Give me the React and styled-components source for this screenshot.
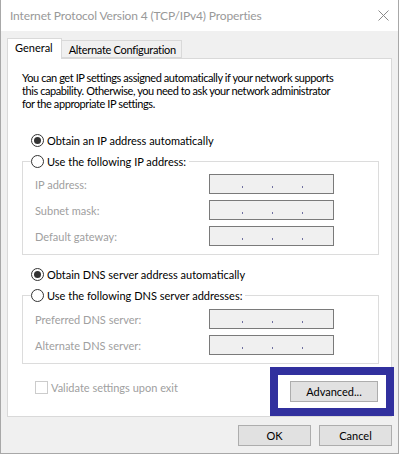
import styled, { createGlobalStyle } from "styled-components";

const GlobalStyle = createGlobalStyle`
    html, body {
        margin: 0;
        padding: 0;
        background: #ffffff;
    }
    * {
        box-sizing: border-box;
    }
`;

const font = `Lato, "Noto Sans", "Liberation Sans", sans-serif`;

const StyledWindow = styled.div`
    position: relative;
    width: 399px;
    height: 454px;
    background: #f0f0f0;
    border: 1px solid #a8a8a8;
    border-top: none;
    font-family: ${font};
    font-size: 11px;
    color: #000;
    display: flex;
    flex-direction: column;
    white-space: nowrap;
`;

const StyledTitleBar = styled.div`
    height: 31px;
    background: #fff;
    display: flex;
    align-items: center;
    justify-content: space-between;
    padding: 0 9px 0 9px;
    color: #999;
    font-size: 12px;
    letter-spacing: -0.15px;
`;

const StyledBody = styled.div`
    padding: 7px 6px 0 6px;
`;

const StyledTabs = styled.div`
    display: flex;
    align-items: flex-end;
    height: 20px;
    position: relative;
    z-index: 1;
`;

const StyledTab = styled.div`
    height: ${({ active }) => (active ? "21px" : "18px")};
    margin-bottom: ${({ active }) => (active ? "-1px" : "0")};
    margin-left: ${({ active }) => (active ? "0" : "-1px")};
    padding: 0 ${({ active }) => (active ? "8px" : "5px")} 0 7px;
    background: ${({ active }) => (active ? "#fff" : "#f0f0f0")};
    border: 1px solid #d9d9d9;
    border-bottom: ${({ active }) => (active ? "none" : "1px solid #d9d9d9")};
    display: flex;
    align-items: center;
    padding-bottom: ${({ active }) => (active ? "3px" : "0")};
    letter-spacing: ${({ active }) => (active ? "0" : "-0.3px")};
`;

const StyledPanel = styled.div`
    height: 359px;
    background: #fff;
    border: 1px solid #d9d9d9;
    padding: 12px 12px 0 14px;
    display: flex;
    flex-direction: column;
`;

const StyledIntro = styled.p`
    margin: 0;
    line-height: 13px;
    letter-spacing: -0.42px;
`;

const StyledRadioRow = styled.label`
    display: flex;
    align-items: center;
    height: 16px;
    margin-top: ${({ top }) => top || 0}px;
    margin-left: 9px;
    gap: 3px;
`;

const StyledRadio = styled.span`
    width: 13px;
    height: 13px;
    border-radius: 50%;
    border: 1px solid #333;
    background: #fff;
    display: flex;
    align-items: center;
    justify-content: center;

    &::after {
        content: "";
        width: 7px;
        height: 7px;
        border-radius: 50%;
        background: ${({ checked }) => (checked ? "#333" : "transparent")};
    }
`;

const StyledGroup = styled.fieldset`
    margin: ${({ top }) => top || 0}px 0 0 0;
    padding: 0 0 8px 0;
    border: 1px solid #dcdcdc;
    display: flex;
    flex-direction: column;
    gap: 6px;

    legend {
        margin-left: 8px;
        padding: 0 3px 0 0;
    }
    legend label {
        margin: 0;
    }
`;

const StyledFieldRow = styled.div`
    display: flex;
    align-items: center;
    justify-content: space-between;
    padding: 0 44px 0 12px;
    color: #a0a0a0;
    margin-top: ${({ top }) => top || 0}px;
`;

const StyledIpBox = styled.div`
    width: 125px;
    height: 20px;
    border: 1px solid #7a7a7a;
    background: #f0f0f0;
    display: flex;
    align-items: flex-end;
    gap: 29px;
    padding: 0 0 5px 32px;

    span {
        width: 1px;
        height: 2px;
        background: #7070a0;
    }
`;

const StyledBottomRow = styled.div`
    display: flex;
    align-items: flex-start;
    justify-content: space-between;
    margin-top: 17px;
    padding-left: 13px;
`;

const StyledCheckLabel = styled.label`
    display: flex;
    align-items: center;
    height: 16px;
    margin-top: -2px;
    gap: 3px;
    color: #a0a0a0;
`;

const StyledCheckbox = styled.span`
    width: 13px;
    height: 13px;
    border: 1px solid #cccccc;
    background: #fff;
`;

const StyledButton = styled.button`
    width: ${({ w }) => w}px;
    height: 21px;
    background: #e1e1e1;
    border: 1px solid #adadad;
    font-family: ${font};
    font-size: 11px;
    color: #000;
    padding: 0;
`;

const StyledHighlight = styled.div`
    position: relative;
    margin-right: 1px;

    &::before {
        content: "";
        position: absolute;
        left: -20px;
        top: -14px;
        right: -16px;
        bottom: -14px;
        border: 8px solid #31309e;
    }
`;

const StyledFooter = styled.div`
    display: flex;
    justify-content: flex-end;
    gap: 8px;
    padding: 8px 6px 0 0;
`;

const IpBox = () => (
    <StyledIpBox>
        <span />
        <span />
        <span />
    </StyledIpBox>
);

const CloseIcon = () => (
    <svg width="11" height="11" viewBox="0 0 11 11">
        <path d="M0.5 0.5 L10.5 10.5 M10.5 0.5 L0.5 10.5" stroke="#8a8a8a" strokeWidth="1" />
    </svg>
);

const ipFields = ["IP address:", "Subnet mask:", "Default gateway:"];
const dnsFields = ["Preferred DNS server:", "Alternate DNS server:"];

const App = () => {
    return (
        <>
            <GlobalStyle />
            <StyledWindow>
                <StyledTitleBar>
                    <span>Internet Protocol Version 4 (TCP/IPv4) Properties</span>
                    <CloseIcon />
                </StyledTitleBar>
                <StyledBody>
                    <StyledTabs>
                        <StyledTab active>General</StyledTab>
                        <StyledTab>Alternate Configuration</StyledTab>
                    </StyledTabs>
                    <StyledPanel>
                        <StyledIntro>
                            You can get IP settings assigned automatically if your network supports
                            <br />
                            this capability. Otherwise, you need to ask your network administrator
                            <br />
                            for the appropriate IP settings.
                        </StyledIntro>
                        <StyledRadioRow top={22}>
                            <StyledRadio checked />
                            Obtain an IP address automatically
                        </StyledRadioRow>
                        <StyledGroup top={5}>
                            <legend>
                                <StyledRadioRow>
                                    <StyledRadio />
                                    Use the following IP address:
                                </StyledRadioRow>
                            </legend>
                            {ipFields.map((label, index) => (
                                <StyledFieldRow key={index} top={index === 0 ? 5 : 0}>
                                    <span>{label}</span>
                                    <IpBox />
                                </StyledFieldRow>
                            ))}
                        </StyledGroup>
                        <StyledRadioRow top={11}>
                            <StyledRadio checked />
                            Obtain DNS server address automatically
                        </StyledRadioRow>
                        <StyledGroup top={5}>
                            <legend>
                                <StyledRadioRow>
                                    <StyledRadio />
                                    Use the following DNS server addresses:
                                </StyledRadioRow>
                            </legend>
                            {dnsFields.map((label, index) => (
                                <StyledFieldRow key={index} top={index === 0 ? 6 : 0}>
                                    <span>{label}</span>
                                    <IpBox />
                                </StyledFieldRow>
                            ))}
                        </StyledGroup>
                        <StyledBottomRow>
                            <StyledCheckLabel>
                                <StyledCheckbox />
                                Validate settings upon exit
                            </StyledCheckLabel>
                            <StyledHighlight>
                                <StyledButton w={88}>Advanced...</StyledButton>
                            </StyledHighlight>
                        </StyledBottomRow>
                    </StyledPanel>
                </StyledBody>
                <StyledFooter>
                    <StyledButton w={73}>OK</StyledButton>
                    <StyledButton w={73}>Cancel</StyledButton>
                </StyledFooter>
            </StyledWindow>
        </>
    );
};

export default App;
